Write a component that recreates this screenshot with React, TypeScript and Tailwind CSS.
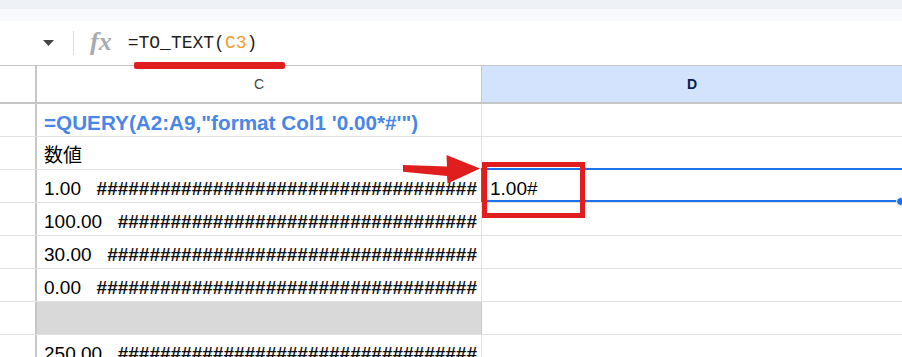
import React from 'react';

interface Row {
  num?: string;
  hashes?: number;
  gray?: boolean;
  text?: string;
  query?: boolean;
}

const rows: Row[] = [
  { text: `=QUERY(A2:A9,"format Col1 '0.00*#'")`, query: true },
  { text: '数値' },
  { num: '1.00', hashes: 36 },
  { num: '100.00', hashes: 34 },
  { num: '30.00', hashes: 35 },
  { num: '0.00', hashes: 36 },
  { gray: true },
  { num: '250.00', hashes: 34 },
];

const cellFont = { fontFamily: '"Liberation Sans", Arial, "Noto Sans CJK JP", sans-serif' };

const CellC: React.FC<{ row: Row }> = ({ row }) => {
  if (row.gray) return <div className="h-full bg-[#d9d9d9] border-r border-[#c9c9c9]" />;
  if (row.num) {
    return (
      <div className="h-full flex items-end pb-[2px] pl-[7px] pr-[4px] border-r border-[#e1e1e1] overflow-hidden whitespace-nowrap text-[19px] leading-[22px] text-black">
        <span>{row.num}</span>
        <span className="flex-1 flex justify-end overflow-hidden font-bold text-[#111]">{'#'.repeat(row.hashes ?? 0)}</span>
      </div>
    );
  }
  return (
    <div
      className={`h-full flex items-end pb-[2px] pl-[7px] border-r border-[#e1e1e1] overflow-hidden whitespace-nowrap leading-[22px] ${
        row.query ? 'text-[20.7px] font-bold text-[#4a86e8]' : 'text-[19px] text-black'
      }`}
    >
      {row.text}
    </div>
  );
};

export default function App() {
  return (
    <div className="relative w-[902px] h-[357px] overflow-hidden bg-white" style={cellFont}>
      <div className="h-[9px] bg-[#eef1f6]" />
      <div className="h-[12px] bg-[#f8f9fc]" />

      {/* formula bar */}
      <div className="h-[44px] flex items-center">
        <svg className="ml-[43px] mt-[-1px]" width="11" height="6" viewBox="0 0 11 6">
          <polygon points="0,0 11,0 5.5,6" fill="#444746" />
        </svg>
        <div className="ml-[19px] w-px h-[24px] bg-[#dadce0]" />
        <span
          className="ml-[16px] mt-[-2px] text-[26px] leading-none italic font-bold text-[#a8abae]"
          style={{ fontFamily: '"Liberation Serif", "DejaVu Serif", serif' }}
        >
          fx
        </span>
        <span
          className="ml-[16px] text-[18px] text-[#1f1f1f]"
          style={{ fontFamily: '"Liberation Mono", "DejaVu Sans Mono", monospace' }}
        >
          =TO_TEXT(<span className="text-[#f29d2e]">C3</span>)
        </span>
      </div>

      {/* column headers */}
      <div className="grid grid-cols-[37px_445px_1fr] h-[39px] border-t border-b-2 border-[#c4c7c5]">
        <div className="border-r-2 border-[#c4c7c5]" />
        <div className="flex items-center justify-center text-[14px] text-[#444746] border-r border-[#c4c7c5]">C</div>
        <div className="flex items-center justify-center bg-[#d3e3fd] text-[14px] font-bold text-[#041e49]">D</div>
      </div>

      {/* rows */}
      {rows.map((row, i) => (
        <div key={i} className="grid grid-cols-[37px_445px_1fr] h-[33px] border-b border-[#e1e1e1]">
          <div className="border-r-2 border-[#c4c7c5]" />
          <CellC row={row} />
          <div className="flex items-end pb-[2px] pl-[8px] text-[19px] leading-[22px] text-black">
            {i === 2 ? '1.00#' : ''}
          </div>
        </div>
      ))}

      {/* selection of D3 */}
      <div className="absolute left-[481px] top-[168px] w-[440px] h-[34px] border-2 border-[#1a73e8]" />
      <div className="absolute left-[896px] top-[197px] w-[9px] h-[9px] rounded-full bg-[#1a73e8] border border-white" />

      {/* annotations */}
      <div className="absolute left-[134px] top-[62px] w-[151px] h-[7px] rounded-[2px] bg-[#e01e1e]" />
      <div className="absolute left-[482px] top-[162px] w-[103px] h-[56px] border-[5px] border-[#e01e1e]" />
      <svg className="absolute left-[400px] top-[150px]" width="85" height="40" viewBox="0 0 85 40">
        <polygon
          points="3,15 47,16.5 46.5,5 80,18.5 47.5,33.5 47,26 3,21.7"
          fill="#e01e1e"
        />
      </svg>
    </div>
  );
}
